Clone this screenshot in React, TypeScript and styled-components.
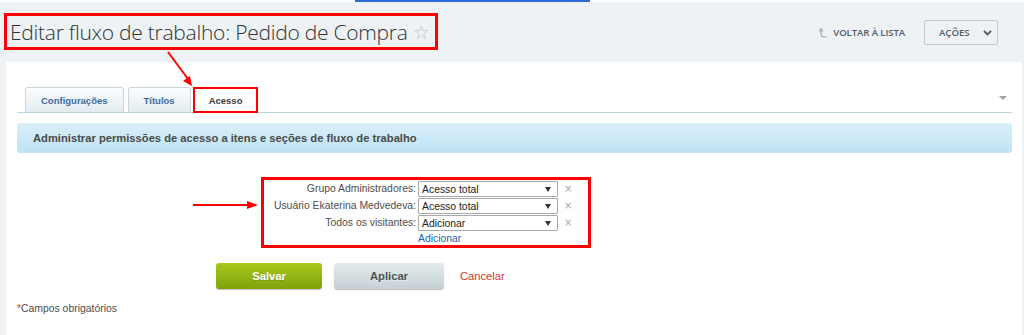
import React from "react";
import styled, { createGlobalStyle } from "styled-components";

const GlobalStyle = createGlobalStyle`
  html, body { margin: 0; padding: 0; }
  body {
    background: #eef2f4;
    font-family: "Liberation Sans", Arial, sans-serif;
    width: 1024px;
    height: 335px;
    overflow: hidden;
  }
`;

const Page = styled.div`
  position: relative;
  width: 1024px;
  height: 335px;
  display: flex;
  flex-direction: column;
`;

const TopStrip = styled.div`
  display: flex;
  height: 2px;
  background: #ffffff;
`;

const TopAccent = styled.div`
  margin-left: 355px;
  width: 235px;
  height: 2px;
  background: #2f6bd8;
`;

const Header = styled.div`
  display: flex;
  align-items: flex-start;
  height: 60px;
  padding: 0 26px 0 4px;
`;

const TitleBox = styled.div`
  margin-top: 11px;
  border: 3px solid #ff0000;
  height: 31px;
  padding: 0 5px 0 3px;
  display: flex;
  align-items: center;
`;

const Title = styled.h1`
  margin: 0;
  font-family: "Open Sans", sans-serif;
  font-weight: 300;
  font-size: 21px;
  letter-spacing: -0.25px;
  color: #2f3338;
  white-space: nowrap;
`;

const Star = styled.span`
  margin-left: 5px;
  color: #b7bdc3;
  font-family: "DejaVu Sans", sans-serif;
  font-size: 19px;
`;

const HeaderActions = styled.div`
  margin-left: auto;
  display: flex;
  align-items: center;
  margin-top: 18px;
  height: 25px;
`;

const BackLink = styled.span`
  display: flex;
  align-items: center;
  gap: 5px;
  font-family: "Open Sans", sans-serif;
  font-weight: 600;
  font-size: 9.6px;
  color: #535c69;
  margin-right: 19px;
  letter-spacing: -0.1px;
`;

const ActionsButton = styled.div`
  box-sizing: border-box;
  width: 74px;
  height: 25px;
  border: 1px solid #c3c9ce;
  border-radius: 2px;
  display: flex;
  align-items: center;
  padding-left: 14px;
  gap: 13px;
  font-family: "Open Sans", sans-serif;
  font-weight: 600;
  font-size: 9.6px;
  color: #535c69;
`;

const Panel = styled.div`
  flex: 1;
  margin: 0 2px 0 6px;
  background: #ffffff;
  padding: 25px 10px 0 11px;
  display: flex;
  flex-direction: column;
`;

const TabRow = styled.div`
  display: flex;
  align-items: flex-end;
  height: 25px;
  padding-left: 8px;
  border-bottom: 1px solid #bed5de;
`;

const Tab = styled.div<{ $active?: boolean }>`
  box-sizing: border-box;
  height: ${(p) => (p.$active ? "26px" : "25px")};
  margin-bottom: ${(p) => (p.$active ? "-1px" : "0")};
  margin-right: ${(p) => (p.$active ? "0" : "4px")};
  margin-left: ${(p) => (p.$active ? "-2px" : "0")};
  padding: 0 ${(p) => (p.$active ? "14px" : "15px")};
  display: flex;
  align-items: center;
  font-weight: bold;
  font-size: 9.5px;
  color: ${(p) => (p.$active ? "#3a3a3a" : "#3d6a9e")};
  border: ${(p) => (p.$active ? "2px solid #ff0000" : "1px solid #cad7dd")};
  border-bottom: ${(p) => (p.$active ? "2px solid #ff0000" : "none")};
  border-radius: ${(p) => (p.$active ? "0" : "3px 3px 0 0")};
  background: ${(p) =>
    p.$active ? "#ffffff" : "linear-gradient(#fbfdfe, #e3ebef)"};
`;

const TabMenu = styled.span`
  margin-left: auto;
  align-self: center;
  margin-right: 5px;
  margin-bottom: 3px;
  width: 0;
  height: 0;
  border-left: 4px solid transparent;
  border-right: 4px solid transparent;
  border-top: 4px solid #9aa3a8;
`;

const InfoBar = styled.div`
  margin-top: 10px;
  height: 30px;
  border-radius: 3px;
  background: linear-gradient(#daf0f9, #bde3f3);
  display: flex;
  align-items: center;
  padding-left: 16px;
  font-weight: bold;
  font-size: 11.2px;
  color: #4a4a4a;
`;

const FormArea = styled.div`
  position: relative;
  padding-top: 28px;
`;

const FieldRow = styled.div`
  display: grid;
  grid-template-columns: calc(40% + 3px) 1fr;
  height: 17px;
  align-items: start;
`;

const Label = styled.div`
  text-align: right;
  padding-right: 2px;
  font-size: 10.4px;
  line-height: 16px;
  color: #4d4d4d;
`;

const Control = styled.div`
  display: flex;
  align-items: center;
  gap: 6px;
`;

const SelectBox = styled.div`
  box-sizing: border-box;
  width: 140px;
  height: 16px;
  border: 1px solid #a9a9a9;
  border-radius: 1px;
  background: #fff;
  display: flex;
  align-items: center;
  padding: 0 6px 0 3px;
  font-size: 10.4px;
  color: #222;
`;

const SelectArrow = styled.span`
  margin-left: auto;
  width: 0;
  height: 0;
  border-left: 3px solid transparent;
  border-right: 3px solid transparent;
  border-top: 5px solid #333;
`;

const Remove = styled.span`
  font-family: "DejaVu Sans", sans-serif;
  font-size: 10px;
  color: #a8a8a8;
  line-height: 16px;
`;

const AddLink = styled.a`
  font-size: 10.4px;
  line-height: 13px;
  color: #2067b0;
  text-decoration: none;
`;

const AnnotationBox = styled.div`
  position: absolute;
  left: 244px;
  top: 24px;
  width: 330px;
  height: 71px;
  box-sizing: border-box;
  border: 3px solid #ff0000;
  pointer-events: none;
`;

const Overlay = styled.svg`
  position: absolute;
  pointer-events: none;
  overflow: visible;
`;

const ButtonRow = styled.div`
  display: flex;
  align-items: center;
  margin-top: 14px;
  padding-left: 199px;
`;

const Button = styled.div<{ $variant: "primary" | "secondary" }>`
  box-sizing: border-box;
  height: 26px;
  width: ${(p) => (p.$variant === "primary" ? "106px" : "110px")};
  margin-right: ${(p) => (p.$variant === "primary" ? "12px" : "16px")};
  border-radius: 3px;
  display: flex;
  align-items: center;
  justify-content: center;
  font-weight: bold;
  font-size: 11.2px;
  color: ${(p) => (p.$variant === "primary" ? "#ffffff" : "#4a5258")};
  text-shadow: ${(p) =>
    p.$variant === "primary" ? "0 1px 0 rgba(0,0,0,0.15)" : "0 1px 0 rgba(255,255,255,0.5)"};
  background: ${(p) =>
    p.$variant === "primary"
      ? "linear-gradient(#a9c91e, #7fa20c)"
      : "linear-gradient(#e3eaec, #c7d1d5)"};
  box-shadow: 0 1px 1px rgba(0, 0, 0, 0.25);
`;

const CancelLink = styled.a`
  font-size: 11.2px;
  color: #d8332b;
  text-decoration: none;
`;

const Required = styled.div`
  margin-top: 14px;
  font-size: 10.4px;
  color: #4d4d4d;
`;

const Asterisk = styled.span`
  color: #e0322a;
`;

const rows = [
  { label: "Grupo Administradores:", value: "Acesso total" },
  { label: "Usuário Ekaterina Medvedeva:", value: "Acesso total" },
  { label: "Todos os visitantes:", value: "Adicionar" },
];

export default function App() {
  return (
    <>
      <GlobalStyle />
      <Page>
        <TopStrip>
          <TopAccent />
        </TopStrip>
        <Header>
          <TitleBox>
            <Title>Editar fluxo de trabalho: Pedido de Compra</Title>
            <Star>☆</Star>
          </TitleBox>
          <HeaderActions>
            <BackLink>
              <svg width="9" height="10" viewBox="0 0 9 10">
                <path d="M2 1 V6 Q2 9 5 9 H8" fill="none" stroke="#a3abb2" strokeWidth="1.2" />
                <path d="M0 3.5 L2 0.8 L4 3.5" fill="none" stroke="#a3abb2" strokeWidth="1.2" />
              </svg>
              VOLTAR À LISTA
            </BackLink>
            <ActionsButton>
              AÇÕES
              <svg width="9" height="6" viewBox="0 0 9 6">
                <path d="M1 1 L4.5 4.5 L8 1" fill="none" stroke="#535c69" strokeWidth="1.8" />
              </svg>
            </ActionsButton>
          </HeaderActions>
        </Header>
        <Panel>
          <TabRow>
            <Tab>Configurações</Tab>
            <Tab>Títulos</Tab>
            <Tab $active>Acesso</Tab>
            <TabMenu />
          </TabRow>
          <InfoBar>Administrar permissões de acesso a itens e seções de fluxo de trabalho</InfoBar>
          <FormArea>
            {rows.map((r) => (
              <FieldRow key={r.label}>
                <Label>{r.label}</Label>
                <Control>
                  <SelectBox>
                    {r.value}
                    <SelectArrow />
                  </SelectBox>
                  <Remove>×</Remove>
                </Control>
              </FieldRow>
            ))}
            <FieldRow>
              <span />
              <Control>
                <AddLink href="#">Adicionar</AddLink>
              </Control>
            </FieldRow>
            <AnnotationBox />
            <Overlay width="70" height="12" viewBox="0 0 70 12" style={{ left: 176, top: 46 }}>
              <line x1="0" y1="6" x2="56" y2="6" stroke="#ff0000" strokeWidth="2" />
              <path d="M54 2 L65 6 L54 10 Z" fill="#ff0000" />
            </Overlay>
          </FormArea>
          <ButtonRow>
            <Button $variant="primary">Salvar</Button>
            <Button $variant="secondary">Aplicar</Button>
            <CancelLink href="#">Cancelar</CancelLink>
          </ButtonRow>
          <Required>
            <Asterisk>*</Asterisk>Campos obrigatórios
          </Required>
        </Panel>
        <Overlay width="40" height="40" viewBox="0 0 40 40" style={{ left: 160, top: 50 }}>
          <line x1="8" y1="2" x2="28" y2="29" stroke="#ff0000" strokeWidth="2" />
          <path d="M23 31 L32 36 L30 26 Z" fill="#ff0000" />
        </Overlay>
      </Page>
    </>
  );
}
